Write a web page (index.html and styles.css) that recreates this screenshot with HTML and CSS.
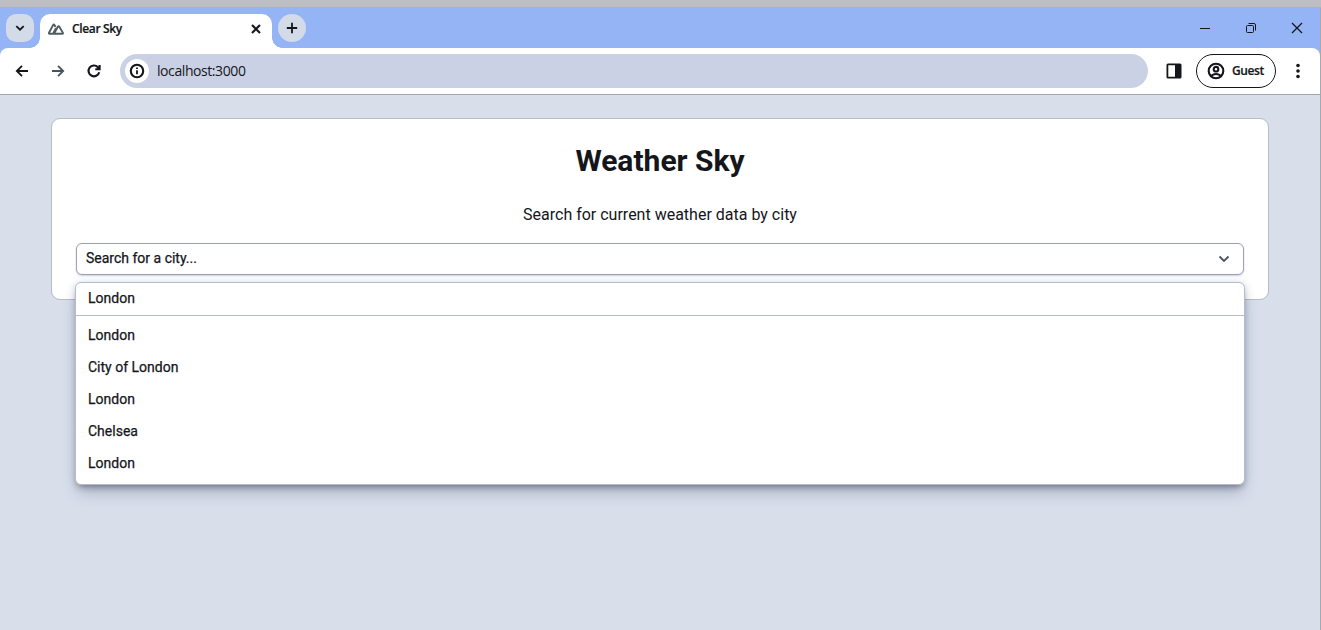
FILE: index.html
```
<!DOCTYPE html>
<html lang="en">
<head>
<meta charset="utf-8">
<title>Clear Sky</title>
<link rel="stylesheet" href="styles.css">
</head>
<body>
<div class="desktop-strip"></div>
<div class="window">
  <header class="tab-bar">
    <button class="tab-search" aria-label="Search tabs"><svg width="20" height="20" viewBox="0 0 20 20"><path d="M6.3 8.2 10 11.7l3.7-3.5" class="stroke-bold"/></svg></button>
    <div class="tab">
      <svg class="favicon" width="16" height="12" viewBox="0 0 16 12"><path d="M6.800 10.700H1.600Q.500 10.700 1 9.700L5.200 1.900Q5.800.900 6.400 1.900L7.600 4M6 10.700h8.200q1.200 0 .600-1.100l-3.600-6q-.600-1-1.200 0L6 10.700q-1 .300-.500-.900L8 5.300"/></svg>
      <span class="tab-title">Clear Sky</span>
      <svg class="tab-close" width="16" height="16" viewBox="0 0 16 16"><path d="m4 4 8 8m0-8-8 8" class="stroke-heavy"/></svg>
    </div>
    <button class="new-tab" aria-label="New tab"><svg width="20" height="20" viewBox="0 0 20 20"><path d="M10 4.800v10.400M4.800 10h10.400" class="stroke-bold"/></svg></button>
    <div class="window-controls">
      <svg width="12" height="12" viewBox="0 0 12 12"><path d="M1 6.500h10"/></svg>
      <svg width="12" height="12" viewBox="0 0 12 12"><rect x="1.500" y="3.500" width="7" height="7" rx="1"/><path d="M3.500 1.500h5.500q1.500 0 1.500 1.500v5.500"/></svg>
      <svg width="12" height="12" viewBox="0 0 12 12"><path d="m1 1 10 10M11 1 1 11" class="stroke-thin"/></svg>
    </div>
  </header>
  <nav class="toolbar">
    <div class="nav-icons">
      <svg width="16" height="16" viewBox="0 0 16 16"><path d="M14 8H2.800M8 2.800 2.800 8 8 13.200" class="stroke-bold"/></svg>
      <svg class="muted" width="16" height="16" viewBox="0 0 16 16"><path d="M2 8h11.200M8 2.800 13.200 8 8 13.200" class="stroke-bold"/></svg>
      <svg width="16" height="16" viewBox="0 0 16 16"><path d="M13.200 9.200A5.400 5.400 0 1 1 11.900 4.200L13.300 5.600M13.600 2v4.300H9.300" class="stroke-heavy"/></svg>
    </div>
    <div class="address">
      <span class="site-info"><svg width="16" height="16" viewBox="0 0 16 16"><circle cx="8" cy="8" r="6.200" class="stroke-heavy"/><path d="M8 7.300v4M8 4.500v1.600" class="stroke-bold"/></svg></span>
      <span class="url">localhost:3000</span>
    </div>
    <svg class="side-panel" width="16" height="16" viewBox="0 0 16 16"><path class="solid" fill-rule="evenodd" d="M2 .500h12q1.500 0 1.500 1.500v12q0 1.500-1.500 1.500H2Q.500 15.500.500 14V2Q.500.500 2 .500ZM2.300 2.300v11.400H9V2.300Z"/></svg>
    <button class="profile">
      <svg width="18" height="18" viewBox="0 0 18 18"><circle cx="9" cy="9" r="7.300" class="stroke-heavy"/><circle cx="9" cy="7.200" r="2.300" class="stroke-heavy"/><path d="M3.800 14q5.200-4 10.400 0" class="stroke-heavy"/></svg>
      <span>Guest</span>
    </button>
    <svg class="menu" width="4" height="16" viewBox="0 0 4 16"><g class="solid"><circle cx="2" cy="2.500" r="1.800"/><circle cx="2" cy="8" r="1.800"/><circle cx="2" cy="13.500" r="1.800"/></g></svg>
  </nav>
  <main class="page">
    <section class="card">
      <h1>Weather Sky</h1>
      <p>Search for current weather data by city</p>
      <div class="select">
        <button class="select-box"><span>Search for a city...</span><svg class="muted" width="12" height="12" viewBox="0 0 12 12"><path d="m1.500 4.500 4.500 4.500 4.500-4.500" class="stroke-bold"/></svg></button>
        <div class="dropdown">
          <div class="query">London</div>
          <ul>
            <li>London</li>
            <li>City of London</li>
            <li>London</li>
            <li>Chelsea</li>
            <li>London</li>
          </ul>
        </div>
      </div>
    </section>
  </main>
</div>
</body>
</html>
```
FILE: styles.css
```
* { box-sizing: border-box; }
body {
  margin: 0;
  height: 630px;
  overflow: hidden;
  display: flex;
  flex-direction: column;
  background: #bcbec4;
  color: #14161b;
  font-family: Roboto, sans-serif;
}
button { border: 0; padding: 0; font: inherit; color: inherit; }
svg { display: block; flex: none; fill: none; stroke: currentColor; stroke-width: 1; }
.stroke-thin { stroke-width: 1.3; }
.stroke-bold { stroke-width: 1.8; }
.stroke-heavy { stroke-width: 2.1; }
.solid { fill: currentColor; stroke: none; }
.muted { color: #49545a; }
.desktop-strip { height: 8px; flex: none; border-bottom: 1px solid #aeb1b7; }
.window {
  flex: 1;
  display: flex;
  flex-direction: column;
  border-right: 1px solid #a4a8b1;
  background: #94b4f6;
}

.tab-bar {
  height: 40px;
  flex: none;
  display: flex;
  padding: 6px 17px 0 6px;
}
.tab-search, .new-tab {
  width: 28px;
  height: 28px;
  display: grid;
  place-items: center;
  background: #d3dae8;
}
.tab-search { border-radius: 10px; }
.new-tab { border-radius: 50%; margin-left: 6px; }
.tab {
  position: relative;
  width: 232px;
  height: 34px;
  margin-left: 6px;
  padding: 0 8px 5px;
  display: flex;
  align-items: center;
  background: #fff;
  border-radius: 10px 10px 0 0;
}
.tab::before, .tab::after {
  content: "";
  position: absolute;
  bottom: 0;
  width: 10px;
  height: 10px;
}
.tab::before { left: -10px; background: radial-gradient(circle at 0 0, transparent 9.5px, #fff 10px); }
.tab::after { right: -10px; background: radial-gradient(circle at 100% 0, transparent 9.5px, #fff 10px); }
.favicon { color: #515c5f; stroke-width: 1.9; }
.tab-title {
  margin-left: 8px;
  flex: 1;
  font: 600 12px/16px "Open Sans", sans-serif;
  letter-spacing: -.35px;
  -webkit-text-stroke: .2px;
}
.window-controls {
  margin-left: auto;
  height: 28px;
  display: flex;
  align-items: center;
  gap: 34px;
}

.toolbar {
  height: 47px;
  flex: none;
  display: flex;
  align-items: center;
  padding: 0 20px 0 14px;
  background: #fff;
  border-bottom: 1px solid #a2a5b0;
  border-radius: 8px 8px 0 0;
}
.nav-icons { display: flex; gap: 20px; }
.address {
  flex: 1;
  height: 34px;
  margin-left: 18px;
  padding-left: 5px;
  display: flex;
  align-items: center;
  border-radius: 17px;
  background: #cbd1e4;
}
.site-info {
  width: 24px;
  height: 24px;
  display: grid;
  place-items: center;
  border-radius: 50%;
  background: #fff;
}
.url { margin-left: 8px; font: 14px/20px "Open Sans", sans-serif; letter-spacing: -.42px; }
.side-panel { margin-left: 18px; }
.profile {
  width: 80px;
  height: 34px;
  margin-left: 14px;
  padding-left: 10px;
  display: flex;
  align-items: center;
  gap: 7px;
  border: 1px solid #14161b;
  border-radius: 17px;
  background: #fff;
  font: 600 12px/16px "Open Sans", sans-serif;
  letter-spacing: -.4px;
  -webkit-text-stroke: .2px;
}
.menu { margin-left: 20px; }

.page { flex: 1; padding: 23px 51px 0; background: #d8dfeb; }
.card {
  height: 182px;
  padding: 24px 24px 0;
  border: 1px solid #b6bbc6;
  border-radius: 9px;
  background: #fff;
  text-align: center;
}
h1 { margin: 0; font-size: 30px; line-height: 36px; font-weight: 700; }
p { margin: 24px 0 16px; font-size: 16px; line-height: 24px; }
.select {
  position: relative;
  font-size: 14px;
  line-height: 20px;
  font-weight: 400;
  -webkit-text-stroke: .25px;
  text-align: left;
}
.select-box {
  width: 100%;
  height: 32px;
  padding: 0 13px 2px 9px;
  display: flex;
  align-items: center;
  justify-content: space-between;
  border: 1px solid #9da1b0;
  border-radius: 6px;
  background: #fff;
  box-shadow: 0 1px 2px #cbd1e4;
}
.dropdown {
  position: absolute;
  top: 39px;
  left: -1px;
  right: -1px;
  height: 203px;
  border: 1px solid #b6bbc6;
  border-radius: 6px;
  background: #fff;
  box-shadow: 0 10px 15px -3px rgba(55, 65, 95, .3), 0 4px 6px -3px rgba(40, 45, 55, .5), 0 0 8px rgba(100, 115, 165, .22);
}
.query { height: 33px; padding: 5px 12px; border-bottom: 1px solid #b6bbc6; }
ul { list-style: none; margin: 0; padding: 3px 0; }
li { height: 32px; padding: 6px 12px; }
```
